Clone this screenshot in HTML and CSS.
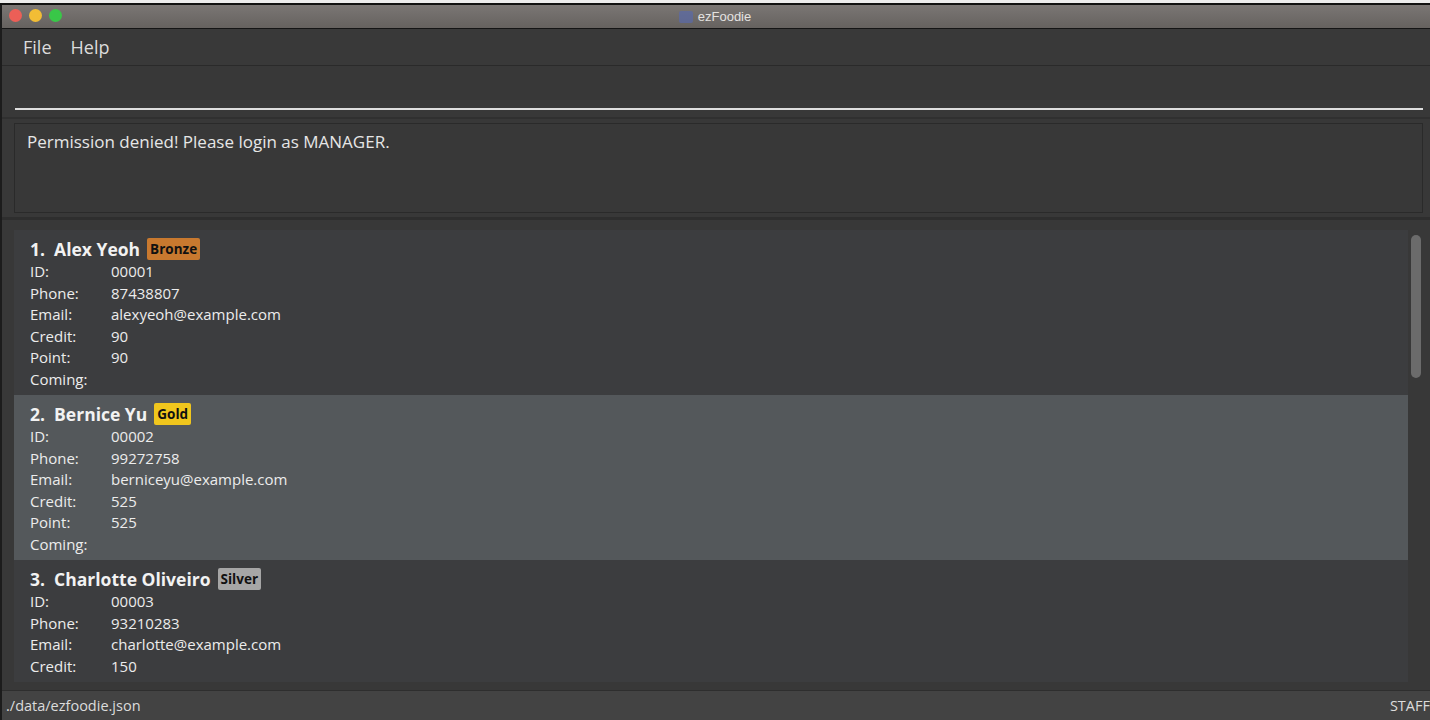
FILE: index.html
```html
<!DOCTYPE html>
<html>
<head>
<meta charset="utf-8">
<link rel="stylesheet" href="styles.css">
</head>
<body>
<div class="topstrip"></div>
<div class="window">
  <div class="titlebar">
    <div class="lights">
      <span class="light red"></span>
      <span class="light yellow"></span>
      <span class="light green"></span>
    </div>
    <div class="title"><span class="title-icon"></span>ezFoodie</div>
  </div>
  <div class="menubar">
    <span class="menu-item">File</span>
    <span class="menu-item">Help</span>
  </div>
  <div class="command">
    <div class="command-input"></div>
  </div>
  <div class="results">
    <div class="results-box">Permission denied! Please login as MANAGER.</div>
  </div>
  <div class="listpane">
    <div class="list">
      <div class="card">
        <div class="name-row"><span class="name">1.&nbsp; Alex Yeoh</span><span class="badge bronze">Bronze</span></div>
        <div class="row"><span class="label">ID:</span><span>00001</span></div>
        <div class="row"><span class="label">Phone:</span><span>87438807</span></div>
        <div class="row"><span class="label">Email:</span><span>alexyeoh@example.com</span></div>
        <div class="row"><span class="label">Credit:</span><span>90</span></div>
        <div class="row"><span class="label">Point:</span><span>90</span></div>
        <div class="row"><span class="label">Coming:</span><span></span></div>
      </div>
      <div class="card selected">
        <div class="name-row"><span class="name">2.&nbsp; Bernice Yu</span><span class="badge gold">Gold</span></div>
        <div class="row"><span class="label">ID:</span><span>00002</span></div>
        <div class="row"><span class="label">Phone:</span><span>99272758</span></div>
        <div class="row"><span class="label">Email:</span><span>berniceyu@example.com</span></div>
        <div class="row"><span class="label">Credit:</span><span>525</span></div>
        <div class="row"><span class="label">Point:</span><span>525</span></div>
        <div class="row"><span class="label">Coming:</span><span></span></div>
      </div>
      <div class="card last">
        <div class="name-row"><span class="name">3.&nbsp; Charlotte Oliveiro</span><span class="badge silver">Silver</span></div>
        <div class="row"><span class="label">ID:</span><span>00003</span></div>
        <div class="row"><span class="label">Phone:</span><span>93210283</span></div>
        <div class="row"><span class="label">Email:</span><span>charlotte@example.com</span></div>
        <div class="row"><span class="label">Credit:</span><span>150</span></div>
      </div>
    </div>
    <div class="scrolltrack"><div class="thumb"></div></div>
  </div>
  <div class="statusbar">
    <span>./data/ezfoodie.json</span>
    <span class="role">STAFF</span>
  </div>
</div>
</body>
</html>
```

FILE: styles.css
```css
html, body {
  margin: 0;
  padding: 0;
  background: #ffffff;
  overflow: hidden;
  height: 720px;
}

body {
  font-family: "Open Sans", "Noto Sans", sans-serif;
}

.topstrip {
  height: 3px;
  background: #ececec;
  border-bottom: 2px solid #111;
}

.window {
  display: flex;
  flex-direction: column;
  height: 715px;
  border-left: 2px solid #1c1c1c;
  background: #383838;
  overflow: hidden;
}

.titlebar {
  height: 23px;
  background: linear-gradient(#7a7674, #66625f);
  border-bottom: 1px solid #151515;
  position: relative;
  display: flex;
  align-items: center;
  justify-content: center;
  flex-shrink: 0;
}

.lights {
  position: absolute;
  left: 7px;
  top: 4px;
  display: flex;
  gap: 7px;
}

.light {
  width: 13px;
  height: 13px;
  border-radius: 50%;
  display: block;
}

.red { background: #ec5f57; }
.yellow { background: #f2bd35; }
.green { background: #39c748; }

.title {
  font-family: "Liberation Sans", Arial, sans-serif;
  font-size: 13px;
  color: #e4e2e0;
  display: flex;
  align-items: center;
  gap: 5px;
  margin-left: -2px;
}

.title-icon {
  width: 14px;
  height: 12px;
  background: #5a6aa8;
  border-radius: 2px;
  opacity: 0.7;
}

.menubar {
  height: 36px;
  border-bottom: 1px solid #2a2a2a;
  display: flex;
  align-items: center;
  padding-left: 21px;
  gap: 19px;
  flex-shrink: 0;
  background: #393939;
}

.menu-item {
  color: #dcdcdc;
  font-size: 18px;
}

.command {
  height: 51px;
  padding: 0 7px 0 13px;
  flex-shrink: 0;
  border-bottom: 2px solid #303030;
}

.command-input {
  height: 42px;
  border-bottom: 2px solid #dedede;
}

.results {
  padding: 4px 7px 4px 12px;
  flex-shrink: 0;
  border-bottom: 3px solid #2e2e2e;
}

.results-box {
  height: 76px;
  border: 1px solid #2a2a2a;
  padding: 6px 12px;
  color: #e6e6e6;
  font-size: 17px;
  line-height: 24px;
}

.listpane {
  display: flex;
  padding: 10px 7px 0 12px;
  height: 452px;
  flex-shrink: 0;
  margin-bottom: 8px;
}

.list {
  flex: 1;
  background: #3c3d3f;
  overflow: hidden;
}

.card {
  height: 165px;
  box-sizing: border-box;
  padding: 6px 16px;
  color: #ececec;
  background: #3c3d3f;
}

.card.last {
  height: 120px;
}

.card.selected {
  background: #54585b;
}

.name-row {
  display: flex;
  align-items: center;
  height: 25px;
  gap: 7px;
}

.name {
  font-weight: 700;
  font-size: 17.5px;
  color: #f2f2f2;
}

.badge {
  font-size: 13.5px;
  font-weight: 700;
  color: #111;
  padding: 1px 3px;
  border-radius: 2px;
  line-height: 20px;
}

.bronze { background: #c8792f; }
.gold { background: #f0c61d; }
.silver { background: #a6a6a6; }

.row {
  display: flex;
  font-size: 15px;
  line-height: 21.5px;
}

.label {
  width: 81px;
}

.scrolltrack {
  width: 15px;
  background: #383838;
  padding-top: 5px;
  display: flex;
  justify-content: center;
}

.thumb {
  width: 10px;
  height: 143px;
  background: #6b6b6b;
  border-radius: 5px;
}

.statusbar {
  flex: 1;
  background: #434343;
  border-top: 1px solid #2e2e2e;
  display: flex;
  justify-content: space-between;
  align-items: center;
  color: #dcdcdc;
  font-size: 14.5px;
  padding-left: 4px;
}

.role {
  margin-right: 0;
}
```
